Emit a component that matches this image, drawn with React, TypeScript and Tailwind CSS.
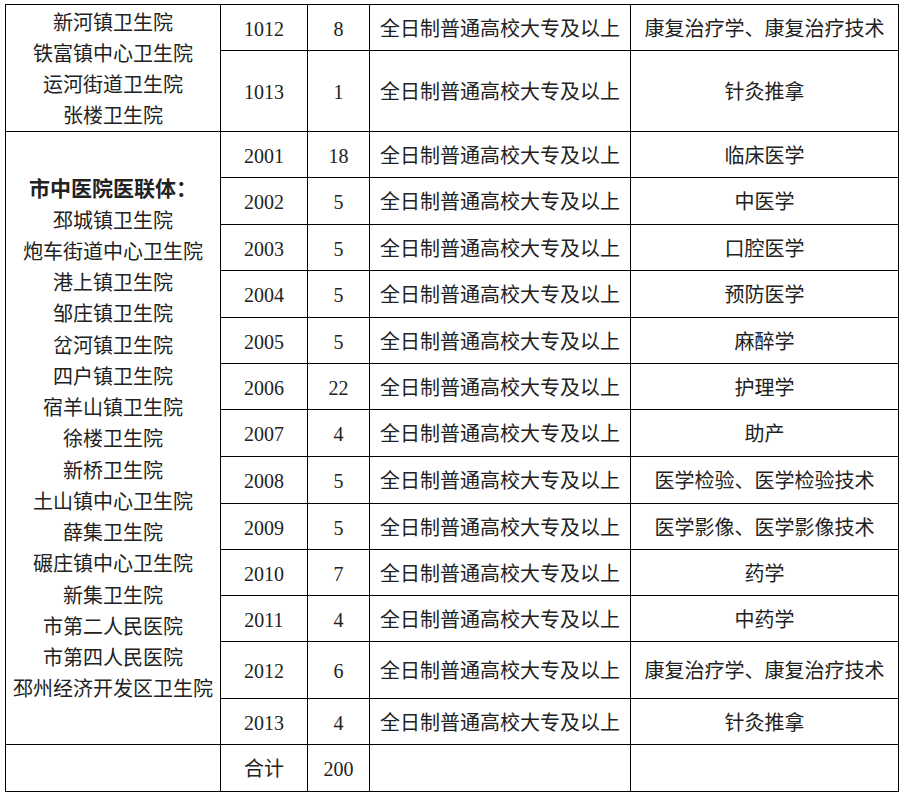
const ROWS: [string, string, string][] = [
  ["1012", "8", "康复治疗学、康复治疗技术"],
  ["1013", "1", "针灸推拿"],
  ["2001", "18", "临床医学"],
  ["2002", "5", "中医学"],
  ["2003", "5", "口腔医学"],
  ["2004", "5", "预防医学"],
  ["2005", "5", "麻醉学"],
  ["2006", "22", "护理学"],
  ["2007", "4", "助产"],
  ["2008", "5", "医学检验、医学检验技术"],
  ["2009", "5", "医学影像、医学影像技术"],
  ["2010", "7", "药学"],
  ["2011", "4", "中药学"],
  ["2012", "6", "康复治疗学、康复治疗技术"],
  ["2013", "4", "针灸推拿"],
];

const GROUP_1 = ["新河镇卫生院", "铁富镇中心卫生院", "运河街道卫生院", "张楼卫生院"];

const GROUP_2 = [
  "邳城镇卫生院",
  "炮车街道中心卫生院",
  "港上镇卫生院",
  "邹庄镇卫生院",
  "岔河镇卫生院",
  "四户镇卫生院",
  "宿羊山镇卫生院",
  "徐楼卫生院",
  "新桥卫生院",
  "土山镇中心卫生院",
  "薛集卫生院",
  "碾庄镇中心卫生院",
  "新集卫生院",
  "市第二人民医院",
  "市第四人民医院",
  "邳州经济开发区卫生院",
];

const cell = "bg-white flex items-center justify-center whitespace-nowrap pt-[2px]";
const groupCell = "bg-white flex flex-col items-center justify-center whitespace-nowrap pt-[4px] leading-[31.25px]";

export default function App() {
  return (
    <div
      className="w-[902px] h-[797px] bg-white pt-[4px] pl-[5px] text-[20px] text-[#222]"
      style={{ fontFamily: '"Liberation Serif", "Noto Sans CJK SC", serif' }}
    >
      <div className="w-[894px] grid gap-px p-px bg-black grid-cols-[214px_86px_61px_260px_267px] grid-rows-[45px_80px_45px_46px_45px_46px_45px_45px_46px_46px_45px_45px_45px_56px_45px_46px]">
        {/* first group spans rows 1-2 */}
        <div className={`${groupCell} row-span-2 col-start-1 row-start-1`}>
          {GROUP_1.map((n) => (
            <span key={n}>{n}</span>
          ))}
        </div>

        {/* second group spans rows 3-15 */}
        <div className={`${groupCell} row-span-13 col-start-1 row-start-3`}>
          <span className="font-bold text-[21px]">市中医院医联体：</span>
          {GROUP_2.map((n) => (
            <span key={n}>{n}</span>
          ))}
        </div>

        {ROWS.map(([code, num, major]) => (
          <div key={code} className="contents">
            <div className={`${cell} col-start-2`}>{code}</div>
            <div className={`${cell} col-start-3`}>{num}</div>
            <div className={`${cell} col-start-4`}>全日制普通高校大专及以上</div>
            <div className={`${cell} col-start-5`}>{major}</div>
          </div>
        ))}

        {/* total row */}
        <div className={`${cell} col-start-1 row-start-16`}></div>
        <div className={`${cell} col-start-2 row-start-16`}>合计</div>
        <div className={`${cell} col-start-3 row-start-16`}>200</div>
        <div className={`${cell} col-start-4 row-start-16`}></div>
        <div className={`${cell} col-start-5 row-start-16`}></div>
      </div>
    </div>
  );
}
